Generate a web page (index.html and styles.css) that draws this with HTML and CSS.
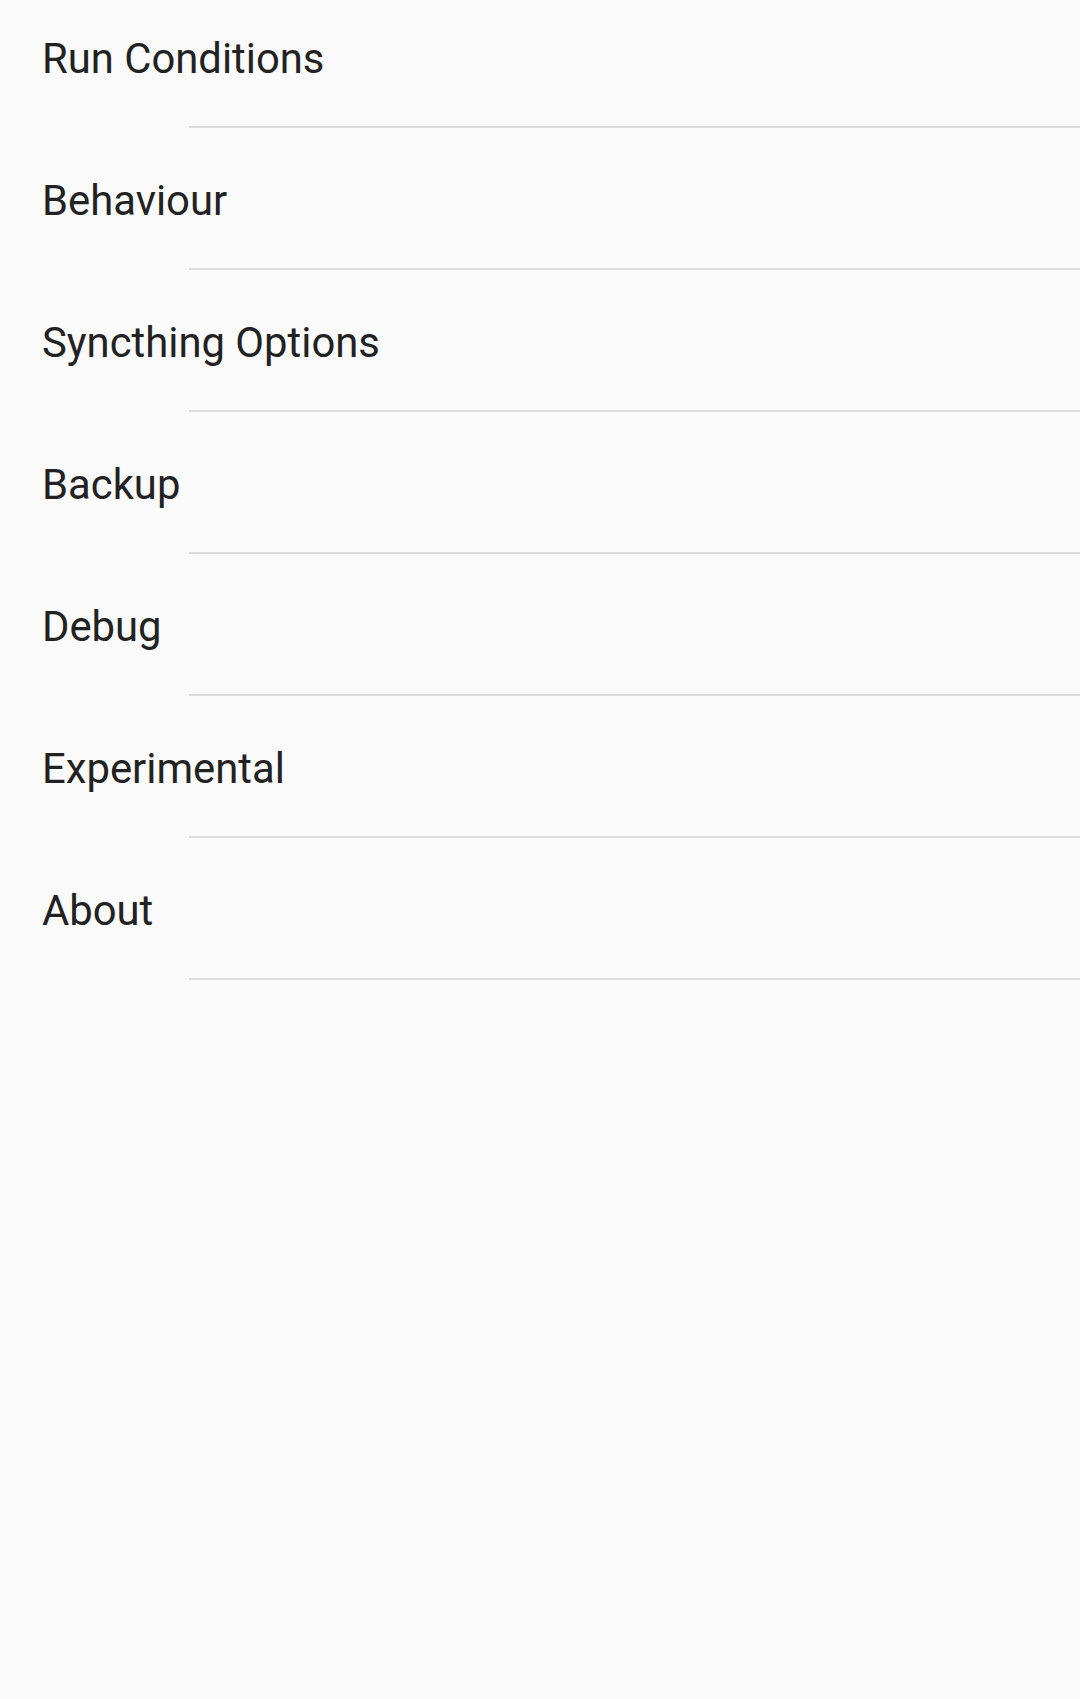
FILE: index.html
```html
<!DOCTYPE html>
<html>
<head>
<meta charset="utf-8">
<link rel="stylesheet" href="styles.css">
</head>
<body>
<ul class="list">
<li class="item"><span class="title">Run Conditions</span></li>
<li class="item"><span class="title">Behaviour</span></li>
<li class="item"><span class="title">Syncthing Options</span></li>
<li class="item"><span class="title">Backup</span></li>
<li class="item"><span class="title">Debug</span></li>
<li class="item"><span class="title">Experimental</span></li>
<li class="item"><span class="title">About</span></li>
</ul>
</body>
</html>
```
FILE: styles.css
```css
html, body {
  margin: 0;
  padding: 0;
  background: #fafafa;
  width: 1080px;
  height: 1699px;
  overflow: hidden;
}
.list {
  list-style: none;
  margin: -14px 0 0 0;
  padding: 0;
}
.item {
  height: 140px;
  display: flex;
  align-items: center;
  padding-left: 42px;
  border-bottom: 2px solid transparent;
  background-image: linear-gradient(#dcdcdc, #dcdcdc);
  background-repeat: no-repeat;
  background-size: calc(100% - 189px) 2px;
  background-position: 189px 100%;
  background-origin: border-box;
  background-clip: border-box;
}
.title {
  font-family: Roboto, "Noto Sans", sans-serif;
  font-size: 41.8px;
  color: #222222;
  line-height: 1.2;
  margin-top: 7px;
}
```
